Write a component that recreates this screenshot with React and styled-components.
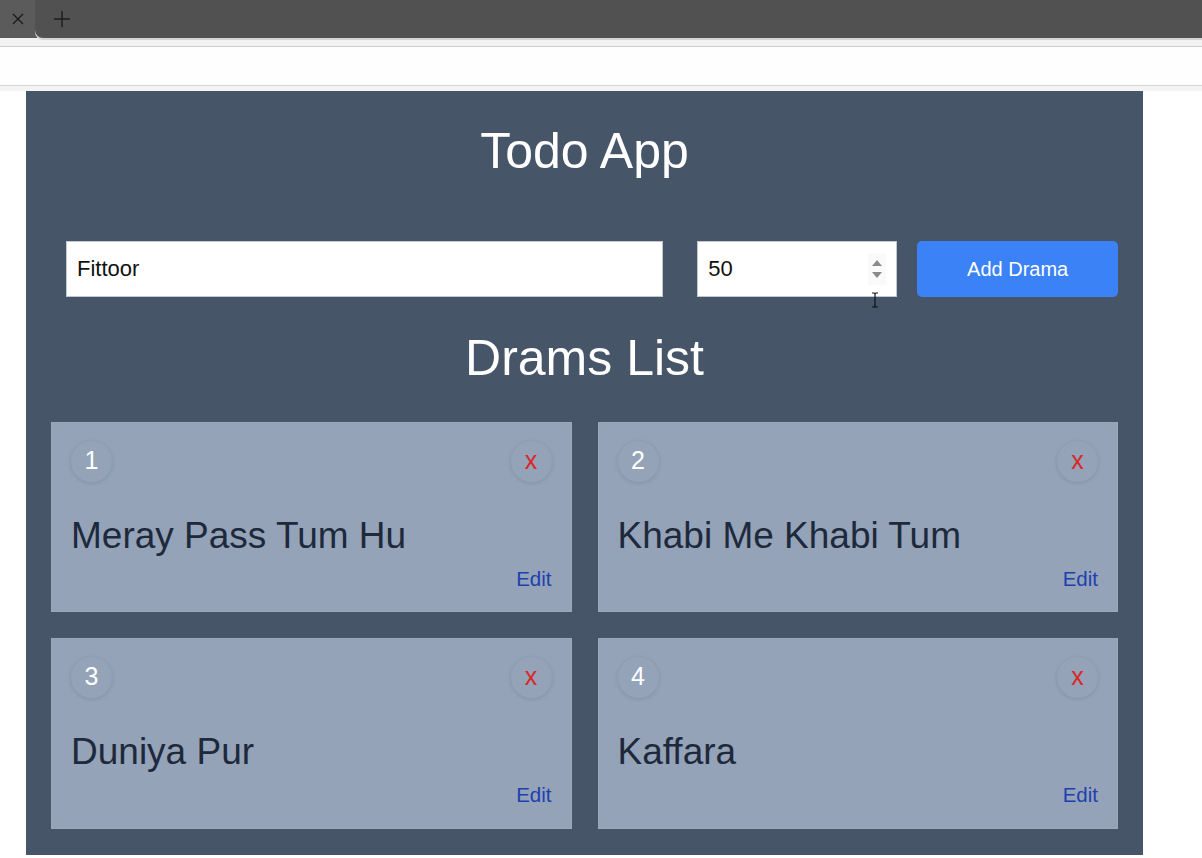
import React, { useState } from 'react';
import styled, { createGlobalStyle } from 'styled-components';

const GlobalStyle = createGlobalStyle`
  html, body {
    margin: 0;
    padding: 0;
    background: #ffffff;
    font-family: "Liberation Sans", Arial, sans-serif;
  }
  * {
    box-sizing: border-box;
  }
`

const TabBar = styled.div`
  display: flex;
  height: 38px;
  background: #5b5b5b;
`

const Tab = styled.div`
  width: 35px;
  display: flex;
  align-items: center;
  justify-content: center;
`

const TabStrip = styled.div`
  flex: 1;
  display: flex;
  align-items: center;
  padding-left: 18px;
  background: #515151;
  border-bottom-left-radius: 8px;
  box-shadow: 0 2px 0 #d4d4d4;
`

const TopStrip = styled.div`
  height: 8px;
  background: #f2f2f2;
  border-bottom: 1px solid #cfcfcf;
  box-sizing: content-box;
`

const AddressBar = styled.div`
  height: 38px;
  background: #fefefe;
  border-bottom: 1px solid #d4d4d4;
  box-sizing: content-box;
`

const ShadowStrip = styled.div`
  height: 5px;
  background: #f4f4f4;
`

const Panel = styled.main`
  margin-left: 26px;
  width: 1117px;
  background: #475569;
  padding: 32px 25px 26px 25px;
`

const Title = styled.h1`
  margin: 0;
  font-size: 50px;
  line-height: 57px;
  font-weight: 400;
  color: #ffffff;
  text-align: center;
`

const FormRow = styled.form`
  display: flex;
  margin: 61px 0 0 15px;
  height: 56px;
`

const TextInput = styled.input`
  width: 598px;
  min-width: 0;
  height: 56px;
  padding: 0 10px;
  border: 1px solid #c3c8d0;
  background: #ffffff;
  font-family: inherit;
  font-size: 22px;
  color: #111111;
  outline: none;
`

const NumberBox = styled.div`
  position: relative;
  display: flex;
  align-items: center;
  width: 200px;
  height: 56px;
  margin-left: 34px;
  background: #ffffff;
  border: 1px solid #c3c8d0;
`

const NumberInput = styled(TextInput)`
  flex: 1;
  width: auto;
  height: 54px;
  border: none;
`

const Spinner = styled.div`
  display: flex;
  flex-direction: column;
  align-items: center;
  justify-content: center;
  gap: 6px;
  width: 18px;
  height: 32px;
  margin-right: 10px;
  background: #fafafa;
`

const Cursor = styled.svg`
  position: absolute;
  left: 173px;
  top: 50px;
`

const AddButton = styled.button`
  width: 201px;
  height: 56px;
  margin-left: 20px;
  border: none;
  border-radius: 5px;
  background: #3b82f6;
  color: #ffffff;
  font-family: inherit;
  font-size: 20px;
  cursor: pointer;
`

const SubTitle = styled(Title).attrs({ as: 'h2' })`
  margin-top: 33px;
`

const Grid = styled.div`
  display: grid;
  grid-template-columns: 1fr 1fr;
  column-gap: 26px;
  row-gap: 26px;
  margin-top: 35px;
`

const Card = styled.div`
  display: flex;
  flex-direction: column;
  height: ${props => props.tall ? 191 : 190}px;
  padding: 18px 19px;
  background: #94a3b8;
  border: 1px solid #9aa8bc;
`

const CardTop = styled.div`
  display: flex;
  justify-content: space-between;
  align-items: center;
`

const Circle = styled.span`
  display: flex;
  align-items: center;
  justify-content: center;
  width: 41px;
  height: 41px;
  padding-bottom: 3px;
  border-radius: 50%;
  background: #94a3b8;
  box-shadow: 0 1px 4px rgba(30, 41, 59, 0.14);
  font-size: 25px;
  color: ${props => props.danger ? '#dc2626' : '#ffffff'};
  cursor: ${props => props.danger ? 'pointer' : 'default'};
`

const DramaName = styled.h3`
  margin: 33px 0 0 0;
  font-size: 37px;
  line-height: 42px;
  font-weight: 400;
  color: #1e293b;
`

const EditLink = styled.a`
  align-self: flex-end;
  margin-top: 10px;
  font-size: 20.5px;
  line-height: 24px;
  color: #1e40af;
  cursor: pointer;
`

const dramas = [
  { id: 1, name: 'Meray Pass Tum Hu' },
  { id: 2, name: 'Khabi Me Khabi Tum' },
  { id: 3, name: 'Duniya Pur' },
  { id: 4, name: 'Kaffara' }
]

export default function App() {
  const [name, setName] = useState('Fittoor')
  const [episodes, setEpisodes] = useState('50')

  return (
    <>
      <GlobalStyle />
      <TabBar>
        <Tab>
          <svg width="14" height="14" viewBox="0 0 14 14">
            <path d="M2 2 L12 12 M12 2 L2 12" stroke="#1c1c1c" strokeWidth="1.4" />
          </svg>
        </Tab>
        <TabStrip>
          <svg width="18" height="18" viewBox="0 0 18 18">
            <path d="M9 1 V17 M1 9 H17" stroke="#1c1c1c" strokeWidth="1.4" />
          </svg>
        </TabStrip>
      </TabBar>
      <TopStrip />
      <AddressBar />
      <ShadowStrip />

      <Panel>
        <Title>Todo App</Title>
        <FormRow onSubmit={e => e.preventDefault()}>
          <TextInput value={name} onChange={e => setName(e.target.value)} />
          <NumberBox>
            <NumberInput value={episodes} onChange={e => setEpisodes(e.target.value)} />
            <Spinner>
              <svg width="10" height="6" viewBox="0 0 10 6">
                <path d="M5 0 L10 6 H0 Z" fill="#8a8a8a" />
              </svg>
              <svg width="10" height="6" viewBox="0 0 10 6">
                <path d="M0 0 H10 L5 6 Z" fill="#8a8a8a" />
              </svg>
            </Spinner>
            <Cursor width="8" height="16" viewBox="0 0 8 16">
              <path d="M1 1 H3 Q4 1 4 2.5 Q4 1 5 1 H7 M4 2.5 V13.5 M1 15 H3 Q4 15 4 13.5 Q4 15 5 15 H7" stroke="#111" strokeWidth="1.2" fill="none" />
            </Cursor>
          </NumberBox>
          <AddButton type="submit">Add Drama</AddButton>
        </FormRow>

        <SubTitle>Drams List</SubTitle>
        <Grid>
          {dramas.map((drama, i) => (
            <Card key={drama.id} tall={i > 1}>
              <CardTop>
                <Circle>{drama.id}</Circle>
                <Circle danger>x</Circle>
              </CardTop>
              <DramaName>{drama.name}</DramaName>
              <EditLink>Edit</EditLink>
            </Card>
          ))}
        </Grid>
      </Panel>
    </>
  )
}
